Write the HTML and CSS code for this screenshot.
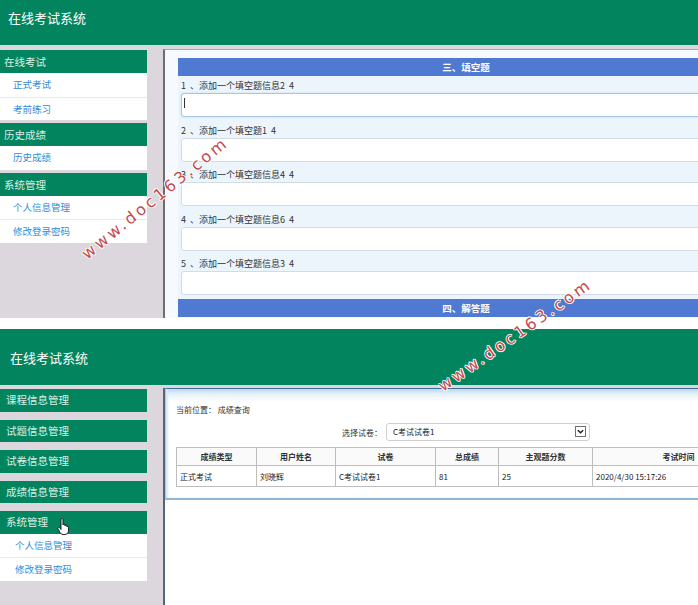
FILE: index.html
```html
<!DOCTYPE html>
<html>
<head>
<meta charset="utf-8">
<title>在线考试系统</title>
<link rel="stylesheet" href="styles.css">
</head>
<body>
<div class="page">
  <section class="shot shot-a">
    <header class="topbar topbar-a">在线考试系统</header>
    <div class="frame frame-a">
      <nav class="side">
        <div class="group group-a">
          <div class="ghead ghead-a">在线考试</div>
          <a class="gitem">正式考试</a>
          <a class="gitem">考前练习</a>
        </div>
        <div class="group group-a">
          <div class="ghead ghead-a">历史成绩</div>
          <a class="gitem">历史成绩</a>
        </div>
        <div class="group group-a">
          <div class="ghead ghead-a">系统管理</div>
          <a class="gitem">个人信息管理</a>
          <a class="gitem">修改登录密码</a>
        </div>
      </nav>
      <main class="panel-a">
        <div class="sec-title">三、填空题</div>
        <div class="qlist">
          <div class="q"><div class="qlabel">1 &nbsp;、添加一个填空题信息2 &nbsp;4</div><div class="qinput focus"></div></div>
          <div class="q"><div class="qlabel">2 &nbsp;、添加一个填空题1 &nbsp;4</div><div class="qinput"></div></div>
          <div class="q"><div class="qlabel">3 &nbsp;、添加一个填空题信息4 &nbsp;4</div><div class="qinput"></div></div>
          <div class="q"><div class="qlabel">4 &nbsp;、添加一个填空题信息6 &nbsp;4</div><div class="qinput"></div></div>
          <div class="q"><div class="qlabel">5 &nbsp;、添加一个填空题信息3 &nbsp;4</div><div class="qinput"></div></div>
        </div>
        <div class="sec-title">四、解答题</div>
      </main>
    </div>
  </section>

  <div class="sep"></div>

  <section class="shot shot-b">
    <header class="topbar topbar-b">在线考试系统</header>
    <div class="frame frame-b">
      <nav class="side">
        <div class="group group-b"><div class="ghead ghead-b">课程信息管理</div></div>
        <div class="group group-b"><div class="ghead ghead-b">试题信息管理</div></div>
        <div class="group group-b"><div class="ghead ghead-b">试卷信息管理</div></div>
        <div class="group group-b"><div class="ghead ghead-b">成绩信息管理</div></div>
        <div class="group group-b last">
          <div class="ghead ghead-b">系统管理</div>
          <a class="gitem gitem-b">个人信息管理</a>
          <a class="gitem gitem-b">修改登录密码</a>
        </div>
      </nav>
      <main class="main-b">
        <div class="panel-b">
          <div class="crumb">当前位置：&nbsp;成绩查询</div>
          <div class="sel-row">
            <span class="sel-label">选择试卷：</span>
            <div class="select">C考试试卷1
              <span class="sel-arrow"><svg viewBox="0 0 10 10" width="9" height="9"><path d="M2 3.5 L5 6.5 L8 3.5" fill="none" stroke="#222" stroke-width="1.6"/></svg></span>
            </div>
          </div>
          <table class="grid">
            <colgroup>
              <col class="c1"><col class="c2"><col class="c3"><col class="c4"><col class="c5"><col class="c6">
            </colgroup>
            <thead>
              <tr><th>成绩类型</th><th>用户姓名</th><th>试卷</th><th>总成绩</th><th>主观题分数</th><th>考试时间</th></tr>
            </thead>
            <tbody>
              <tr><td>正式考试</td><td>刘晓辉</td><td>C考试试卷1</td><td>81</td><td>25</td><td>2020/4/30 15:17:26</td></tr>
            </tbody>
          </table>
        </div>
      </main>
    </div>
  </section>
</div>

<div class="wm wm1">www.doc163.com</div>
<div class="wm wm2">www.doc163.com</div>
<svg class="hand" viewBox="0 0 12 17" width="12" height="17">
  <path d="M4 1.5 Q4 0.5 5 0.5 Q6 0.5 6 1.5 V7 Q6 6 7 6 Q8 6 8 7 V8 Q8 7 9 7 Q10 7 10 8 V9 Q10 8.2 10.8 8.4 Q11.5 8.6 11.5 9.5 V13 Q11.5 16.5 8 16.5 H6 Q4 16.5 3 14.5 L0.8 10.5 Q0.4 9.5 1.3 9.2 Q2.2 9 2.8 10 L4 11.5 Z" fill="#fff" stroke="#111" stroke-width="0.9"/>
</svg>
</body>
</html>
```
FILE: styles.css
```css
html, body {
  margin: 0;
  padding: 0;
}
body {
  width: 698px;
  height: 605px;
  overflow: hidden;
  position: relative;
  background: #fff;
  font-family: "Noto Sans CJK SC", "Microsoft YaHei", sans-serif;
}
.page {
  width: 698px;
}
.shot {
  overflow: hidden;
  background: #dcd7dd;
  display: flex;
  flex-direction: column;
}
.shot-a { height: 318px; }
.shot-b { height: 276px; }
.sep { height: 11px; background: #fff; }

.topbar {
  background: #02855e;
  color: #fff;
  font-size: 13px;
  line-height: 16px;
  box-sizing: border-box;
  flex: none;
}
.topbar-a {
  height: 45px;
  padding: 10px 0 0 8px;
}
.topbar-b {
  height: 56px;
  padding: 21px 0 0 10px;
}

.frame {
  display: flex;
  flex: 1;
  min-height: 0;
}
.frame-a { padding-top: 5px; }
.frame-b { padding-top: 4px; }

.side {
  width: 147px;
  flex: none;
}
.group-a { margin-bottom: 3px; }
.group-b { margin-bottom: 8px; }
.group-b.last { margin-bottom: 0; }

.ghead {
  background: #02855e;
  color: #dcefe6;
  font-size: 10.5px;
  box-sizing: border-box;
}
.ghead-a {
  height: 23px;
  line-height: 23px;
  padding-left: 4px;
}
.ghead-b {
  height: 22.5px;
  line-height: 22.5px;
  padding-left: 6px;
}
.gitem {
  display: block;
  height: 23.5px;
  line-height: 23.5px;
  box-sizing: border-box;
  background: #fff;
  color: #2f8bd6;
  font-size: 9.5px;
  padding-left: 13px;
}
.gitem + .gitem { border-top: 1px solid #e9e9ec; }
.gitem-b { padding-left: 15px; }

/* ---------- top panel ---------- */
.panel-a {
  flex: none;
  width: 620px;
  margin: -1px 0 0 16px;
  border-left: 2px solid #6c6e73;
  border-top: 1px solid #a8a8ab;
  background: #f6f9fd;
  padding: 8px 0 0 13px;
}
.sec-title {
  width: 586px;
  height: 18px;
  line-height: 18px;
  background: #5079d1;
  color: #fff;
  font-size: 9.5px;
  font-weight: bold;
  text-align: center;
  text-indent: -10px;
}
.qlist {
  width: 586px;
  background: #edf5fc;
}
.q { padding-bottom: 3.5px; }
.qlabel {
  height: 17px;
  box-sizing: border-box;
  padding: 3px 0 0 3px;
  line-height: 14px;
  font-size: 9px;
  color: #333;
  white-space: nowrap;
}
.qinput {
  margin-left: 3px;
  height: 24px;
  box-sizing: border-box;
  border: 1px solid #d2dce6;
  border-radius: 3px;
  background: #fff;
  position: relative;
}
.qinput.focus {
  border-color: #a6c7e8;
  box-shadow: 0 0 2px #b8d5f0;
}
.qinput.focus::before {
  content: "";
  position: absolute;
  left: 2px;
  top: 4px;
  width: 1px;
  height: 10px;
  background: #333;
}

/* ---------- bottom panel ---------- */
.main-b {
  flex: 1;
  margin: -1px 0 0 16px;
  border-left: 2px solid #56657a;
  background: #fff;
}
.panel-b {
  width: 640px;
  box-sizing: border-box;
  height: 112px;
  border: 1px solid #a9c9e6;
  border-top-color: #3f6c98;
  border-bottom: 2px solid #8db6da;
  background: linear-gradient(#bcd6ec 0, #e6f1fa 5px, #fff 13px);
  box-shadow: inset 2px 0 2px #d7e8f6;
  padding: 16px 0 0 10px;
}
.crumb {
  font-size: 8px;
  line-height: 10px;
  color: #333;
}
.sel-row {
  display: flex;
  align-items: center;
  margin-top: 8px;
  height: 18px;
}
.sel-label {
  width: 40px;
  margin-left: 166px;
  margin-right: 4px;
  text-align: right;
  font-size: 8px;
  color: #333;
  white-space: nowrap;
}
.select {
  position: relative;
  width: 204px;
  height: 18px;
  box-sizing: border-box;
  border: 1px solid #d0d0d0;
  border-radius: 3px;
  padding-left: 6px;
  font-size: 8px;
  line-height: 16px;
  color: #222;
}
.sel-arrow {
  position: absolute;
  right: 3px;
  top: 2px;
  width: 11px;
  height: 11px;
  box-sizing: border-box;
  border: 1px solid #6f6f6f;
  display: flex;
  align-items: center;
  justify-content: center;
  background: #fff;
}
.grid {
  margin-top: 6px;
  border-collapse: collapse;
  table-layout: fixed;
  width: 588px;
  font-size: 8px;
  color: #222;
}
.c1 { width: 80px; }
.c2 { width: 79px; }
.c3 { width: 100px; }
.c4 { width: 63px; }
.c5 { width: 94px; }
.c6 { width: 172px; }
.grid th, .grid td {
  border: 1px solid #bdbdbd;
  padding: 0 0 0 3px;
  white-space: nowrap;
  overflow: hidden;
}
.grid th {
  height: 17px;
  text-align: center;
  font-weight: 600;
  background: #fafafa;
  color: #333;
  padding: 0;
}
.grid td {
  height: 20px;
  text-align: left;
}

/* ---------- overlays ---------- */
.wm {
  position: absolute;
  white-space: nowrap;
  font-family: "DejaVu Sans", sans-serif;
  font-weight: normal;
  font-size: 16px;
  letter-spacing: 3px;
  color: #c64a4e;
  text-shadow: 0 0 1px #fff, 1px 0 0 #fff, -1px 0 0 #fff, 0 1px 0 #fff, 0 -1px 0 #fff;
  transform: translate(-50%, -50%) rotate(-39deg);
}
.wm1 { left: 155px; top: 198px; }
.wm2 { left: 515px; top: 335px; transform: translate(-50%, -50%) rotate(-35deg); }
.hand {
  position: absolute;
  left: 57px;
  top: 518px;
}
```
